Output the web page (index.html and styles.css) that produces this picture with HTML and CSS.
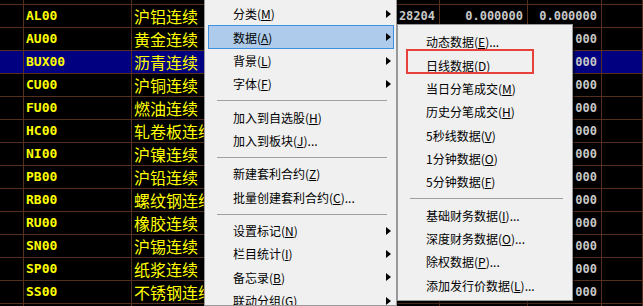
FILE: index.html
```html
<!DOCTYPE html>
<html lang="zh-CN">
<head>
    <meta charset="UTF-8">
    <title>行情列表</title>
    <link rel="stylesheet" href="styles.css">
</head>
<body>
    <!-- 行情表格 -->
    <div class="grid">
        <div class="row"><div class="c0"></div><div class="c1"></div><div class="c2"></div><div class="c3"></div><div class="c4"></div><div class="c5"></div><div class="c6"></div><div class="c7"></div></div>
        <div class="row"><div class="c0"></div><div class="c1">AL00</div><div class="c2">沪铝连续</div><div class="c3"></div><div class="c4">28204</div><div class="c5">0.000000</div><div class="c6">0.000000</div><div class="c7"></div></div>
        <div class="row"><div class="c0"></div><div class="c1">AU00</div><div class="c2">黄金连续</div><div class="c3"></div><div class="c4"></div><div class="c5"></div><div class="c6">000</div><div class="c7"></div></div>
        <div class="row selected"><div class="c0"></div><div class="c1">BUX00</div><div class="c2">沥青连续</div><div class="c3"></div><div class="c4"></div><div class="c5"></div><div class="c6">000</div><div class="c7"></div></div>
        <div class="row"><div class="c0"></div><div class="c1">CU00</div><div class="c2">沪铜连续</div><div class="c3"></div><div class="c4"></div><div class="c5"></div><div class="c6">000</div><div class="c7"></div></div>
        <div class="row"><div class="c0"></div><div class="c1">FU00</div><div class="c2">燃油连续</div><div class="c3"></div><div class="c4"></div><div class="c5"></div><div class="c6">000</div><div class="c7"></div></div>
        <div class="row"><div class="c0"></div><div class="c1">HC00</div><div class="c2">轧卷板连续</div><div class="c3"></div><div class="c4"></div><div class="c5"></div><div class="c6">000</div><div class="c7"></div></div>
        <div class="row"><div class="c0"></div><div class="c1">NI00</div><div class="c2">沪镍连续</div><div class="c3"></div><div class="c4"></div><div class="c5"></div><div class="c6">000</div><div class="c7"></div></div>
        <div class="row"><div class="c0"></div><div class="c1">PB00</div><div class="c2">沪铅连续</div><div class="c3"></div><div class="c4"></div><div class="c5"></div><div class="c6">000</div><div class="c7"></div></div>
        <div class="row"><div class="c0"></div><div class="c1">RB00</div><div class="c2">螺纹钢连续</div><div class="c3"></div><div class="c4"></div><div class="c5"></div><div class="c6">000</div><div class="c7"></div></div>
        <div class="row"><div class="c0"></div><div class="c1">RU00</div><div class="c2">橡胶连续</div><div class="c3"></div><div class="c4"></div><div class="c5"></div><div class="c6">000</div><div class="c7"></div></div>
        <div class="row"><div class="c0"></div><div class="c1">SN00</div><div class="c2">沪锡连续</div><div class="c3"></div><div class="c4"></div><div class="c5"></div><div class="c6">000</div><div class="c7"></div></div>
        <div class="row"><div class="c0"></div><div class="c1">SP00</div><div class="c2">纸浆连续</div><div class="c3"></div><div class="c4"></div><div class="c5"></div><div class="c6">000</div><div class="c7"></div></div>
        <div class="row"><div class="c0"></div><div class="c1">SS00</div><div class="c2">不锈钢连续</div><div class="c3"></div><div class="c4"></div><div class="c5"></div><div class="c6">000</div><div class="c7"></div></div>
        <div class="row"><div class="c0"></div><div class="c1"></div><div class="c2"></div><div class="c3"></div><div class="c4"></div><div class="c5"></div><div class="c6"></div><div class="c7"></div></div>
    </div>

    <!-- 右键菜单 -->
    <div class="menu menu-main">
        <div class="item">分类(<u>M</u>)<span class="arrow"></span></div>
        <div class="item active">数据(<u>A</u>)<span class="arrow"></span></div>
        <div class="item">背景(<u>L</u>)<span class="arrow"></span></div>
        <div class="item">字体(<u>F</u>)<span class="arrow"></span></div>
        <div class="sep"></div>
        <div class="item">加入到自选股(<u>H</u>)</div>
        <div class="item">加入到板块(<u>J</u>)...</div>
        <div class="sep"></div>
        <div class="item">新建套利合约(<u>Z</u>)</div>
        <div class="item">批量创建套利合约(<u>C</u>)...</div>
        <div class="sep"></div>
        <div class="item">设置标记(<u>N</u>)<span class="arrow"></span></div>
        <div class="item">栏目统计(<u>I</u>)<span class="arrow"></span></div>
        <div class="item">备忘录(<u>B</u>)<span class="arrow"></span></div>
        <div class="item">联动分组(<u>G</u>)<span class="arrow"></span></div>
    </div>

    <!-- 数据子菜单 -->
    <div class="menu menu-sub">
        <div class="item">动态数据(<u>E</u>)...</div>
        <div class="item">日线数据(<u>D</u>)</div>
        <div class="item">当日分笔成交(<u>M</u>)</div>
        <div class="item">历史分笔成交(<u>H</u>)</div>
        <div class="item">5秒线数据(<u>V</u>)</div>
        <div class="item">1分钟数据(<u>O</u>)</div>
        <div class="item">5分钟数据(<u>F</u>)</div>
        <div class="sep"></div>
        <div class="item">基础财务数据(<u>I</u>)...</div>
        <div class="item">深度财务数据(<u>O</u>)...</div>
        <div class="item">除权数据(<u>P</u>)...</div>
        <div class="item">添加发行价数据(<u>L</u>)...</div>
    </div>

    <div class="mark"></div>
</body>
</html>
```

FILE: styles.css
```css
body {
    margin: 0;
    width: 643px;
    height: 306px;
    overflow: hidden;
    position: relative;
    background: #000;
    font-family: "Noto Sans CJK SC", sans-serif;
}

/* 表格 */
.grid {
    margin-top: -18px;
    width: 643px;
}

.row {
    display: flex;
    height: 23px;
    border-bottom: 1px solid #55301f;
    box-sizing: border-box;
}

.row.selected {
    background: #000080;
}

.row > div {
    border-right: 1px solid #55301f;
    box-sizing: border-box;
    line-height: 22px;
    white-space: nowrap;
    overflow: hidden;
}

.c0 { width: 24px; }
.c1 {
    width: 108px;
    padding-left: 2px;
    color: #ffff00;
    font-family: "DejaVu Sans Mono", monospace;
    font-weight: bold;
    font-size: 13px;
}
.c2 {
    width: 128px;
    padding-left: 2px;
    color: #ffff00;
    font-size: 16px;
}
.c3 { width: 90px; }
.c4, .c5, .c6 {
    text-align: right;
    padding-right: 4px;
    color: #c8c8c8;
    font-family: "DejaVu Sans Mono", monospace;
    font-weight: bold;
    font-size: 12px;
}
.c4 { width: 90px; }
.c5 { width: 88px; }
.c6 { width: 74px; }
.c7 { flex: 1; }

/* 菜单 */
.menu {
    position: absolute;
    box-sizing: border-box;
    background: #f0f0f0;
    border: 1px solid #999;
    box-shadow: 2px 2px 2px rgba(0,0,0,0.5);
    padding: 5px 2px 4px 3px;
    font-size: 12px;
    color: #000;
}

.menu-main {
    left: 204px;
    top: -4px;
    width: 193px;
    height: 310px;
    overflow: hidden;
}

.menu-sub {
    left: 397px;
    top: 24px;
    width: 176px;
    height: 277px;
}

.item {
    position: relative;
    display: flex;
    align-items: center;
    height: 23.35px;
    padding-left: 24px;
    border: 1px solid transparent;
    box-sizing: border-box;
    white-space: nowrap;
}

.item.active {
    background: #aecbeb;
    border-color: #3d8fe0;
}

.item u {
    text-underline-offset: 1px;
}

.arrow {
    position: absolute;
    right: 2px;
    top: 7px;
    border-left: 5px solid #000;
    border-top: 4px solid transparent;
    border-bottom: 4px solid transparent;
}

.sep {
    height: 1px;
    margin: 5px 7px 4px 9px;
    background: #a0a0a0;
}

/* 红色标注框 */
.mark {
    position: absolute;
    left: 406px;
    top: 49px;
    width: 128px;
    height: 25px;
    box-sizing: border-box;
    border: 2px solid #e8403a;
}
```
